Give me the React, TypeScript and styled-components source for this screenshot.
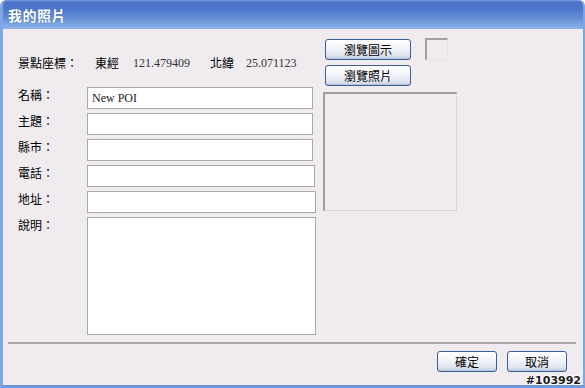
import React from 'react'
import styled, { createGlobalStyle } from 'styled-components'

const GlobalStyle = createGlobalStyle`
  html, body {
    margin: 0;
    padding: 0;
    background: #ffffff;
  }
  body {
    font-family: "Noto Sans CJK TC", "Liberation Sans", sans-serif;
  }
`

const CJK = `"Noto Sans CJK TC", "Noto Sans CJK SC", sans-serif`
const SERIF = `"Liberation Serif", "Noto Sans CJK TC", serif`

const Window = styled.div`
  position: relative;
  width: 585px;
  height: 388px;
  box-sizing: border-box;
  display: flex;
  flex-direction: column;
  background: #efebef;
  border-left: 3px solid #7fa6e4;
  border-right: 2px solid #7fa6e4;
  border-bottom: 3px solid #6f98dc;
  border-top-left-radius: 6px;
  border-top-right-radius: 6px;
  overflow: hidden;
`

const TitleBar = styled.div`
  height: 29px;
  margin: 0 -2px 0 -3px;
  flex-shrink: 0;
  display: flex;
  align-items: center;
  padding-left: 8px;
  background: linear-gradient(#7ea3e6 0px, #4a72c8 2px, #4f7acb 10px, #6a94d8 20px, #8db7ec 29px);
  color: #ffffff;
  font-family: ${CJK};
  font-weight: bold;
  font-size: 14px;
  letter-spacing: 0.5px;
  text-shadow: 0 0 1px #2a4a90;
`

const Body = styled.div`
  flex: 1;
  display: flex;
  flex-direction: column;
  padding: 9px 7px 0 5px;
`

const Content = styled.div`
  display: flex;
  gap: 7px;
  height: 298px;
`

const FormColumn = styled.div`
  display: flex;
  flex-direction: column;
`

const CoordRow = styled.div`
  display: flex;
  align-items: center;
  height: 14px;
  margin-top: 18px;
  margin-left: 10px;
  font-size: 12px;
`

const CjkText = styled.span<{ $gap?: number }>`
  font-family: ${CJK};
  color: #000;
  margin-right: ${({ $gap }) => $gap ?? 0}px;
  line-height: 14px;
`

const Num = styled.span<{ $gap?: number }>`
  font-family: ${SERIF};
  color: #333;
  font-size: 12px;
  margin-right: ${({ $gap }) => $gap ?? 0}px;
`

const FormGrid = styled.div`
  display: grid;
  grid-template-columns: 69px auto;
  grid-auto-rows: 22px;
  row-gap: 4px;
  margin-top: 17px;
  margin-left: 10px;
`

const Label = styled.label`
  font-family: ${CJK};
  font-size: 12px;
  line-height: 14px;
  padding-top: 1px;
  color: #000;
`

const TextInput = styled.div<{ $w: number }>`
  width: ${({ $w }) => $w}px;
  height: 22px;
  box-sizing: border-box;
  background: #fff;
  border: 1px solid #a9a9a9;
  font-family: ${SERIF};
  font-size: 12px;
  line-height: 20px;
  padding-left: 4px;
  color: #222;
`

const TextArea = styled(TextInput)`
  grid-row: span 5;
  height: 118px;
`

const SideColumn = styled.div`
  display: flex;
  flex-direction: column;
`

const BrowseGrid = styled.div`
  display: grid;
  grid-template-columns: 86px 23px;
  column-gap: 14px;
  row-gap: 5px;
  margin-left: 2px;
  margin-top: 1px;
`

const Button = styled.button<{ $w: number }>`
  width: ${({ $w }) => $w}px;
  height: 21px;
  box-sizing: border-box;
  padding: 0;
  border: 1px solid #3b5d9a;
  border-radius: 3px;
  background: linear-gradient(#ffffff 0%, #f3f5fa 40%, #dfe5f0 80%, #c6cfe0 100%);
  font-family: ${CJK};
  font-size: 12px;
  color: #000;
  box-shadow: inset 0 -1px 0 #b9c3d8;
`

const IconBox = styled.div`
  width: 23px;
  height: 22px;
  box-sizing: border-box;
  border-top: 2px solid #a0a0a0;
  border-left: 2px solid #a0a0a0;
  border-right: 1px solid #e6e4e6;
  border-bottom: 1px solid #e6e4e6;
  margin-top: -1px;
`

const PhotoBox = styled.div`
  width: 134px;
  height: 119px;
  box-sizing: border-box;
  margin-top: 6px;
  border-top: 2px solid #9e9e9e;
  border-left: 2px solid #9e9e9e;
  border-right: 1px solid #d8d6d8;
  border-bottom: 1px solid #d8d6d8;
`

const Separator = styled.div`
  height: 2px;
  background: #a8a8a8;
  margin: 6px 0 0 0;
`

const Footer = styled.div`
  display: flex;
  justify-content: flex-end;
  gap: 10px;
  padding: 7px 9px 0 0;
`

const Tag = styled.div`
  position: absolute;
  right: 2px;
  bottom: -2px;
  font-family: "DejaVu Sans", "Liberation Sans", sans-serif;
  font-weight: bold;
  font-size: 11px;
  color: #1a1a1a;
  text-shadow: -1px 0 #fff, 1px 0 #fff, 0 -1px #fff, 0 1px #fff;
`

const fields: { label: string; value?: string; w: number }[] = [
  { label: '名稱：', value: 'New POI', w: 226 },
  { label: '主題：', w: 226 },
  { label: '縣市：', w: 226 },
  { label: '電話：', w: 228 },
  { label: '地址：', w: 229 },
]

export default function App() {
  return (
    <>
      <GlobalStyle />
      <Window>
        <TitleBar>我的照片</TitleBar>
        <Body>
          <Content>
            <FormColumn>
              <CoordRow>
                <CjkText $gap={17}>景點座標：</CjkText>
                <CjkText $gap={14}>東經</CjkText>
                <Num $gap={20}>121.479409</Num>
                <CjkText $gap={12}>北緯</CjkText>
                <Num>25.071123</Num>
              </CoordRow>
              <FormGrid>
                {fields.map((f) => (
                  <React.Fragment key={f.label}>
                    <Label>{f.label}</Label>
                    <TextInput $w={f.w}>{f.value}</TextInput>
                  </React.Fragment>
                ))}
                <Label>說明：</Label>
                <TextArea $w={229} />
              </FormGrid>
            </FormColumn>
            <SideColumn>
              <BrowseGrid>
                <Button $w={86}>瀏覽圖示</Button>
                <IconBox />
                <Button $w={86}>瀏覽照片</Button>
              </BrowseGrid>
              <PhotoBox />
            </SideColumn>
          </Content>
          <Separator />
          <Footer>
            <Button $w={60}>確定</Button>
            <Button $w={60}>取消</Button>
          </Footer>
        </Body>
        <Tag>#103992</Tag>
      </Window>
    </>
  )
}
